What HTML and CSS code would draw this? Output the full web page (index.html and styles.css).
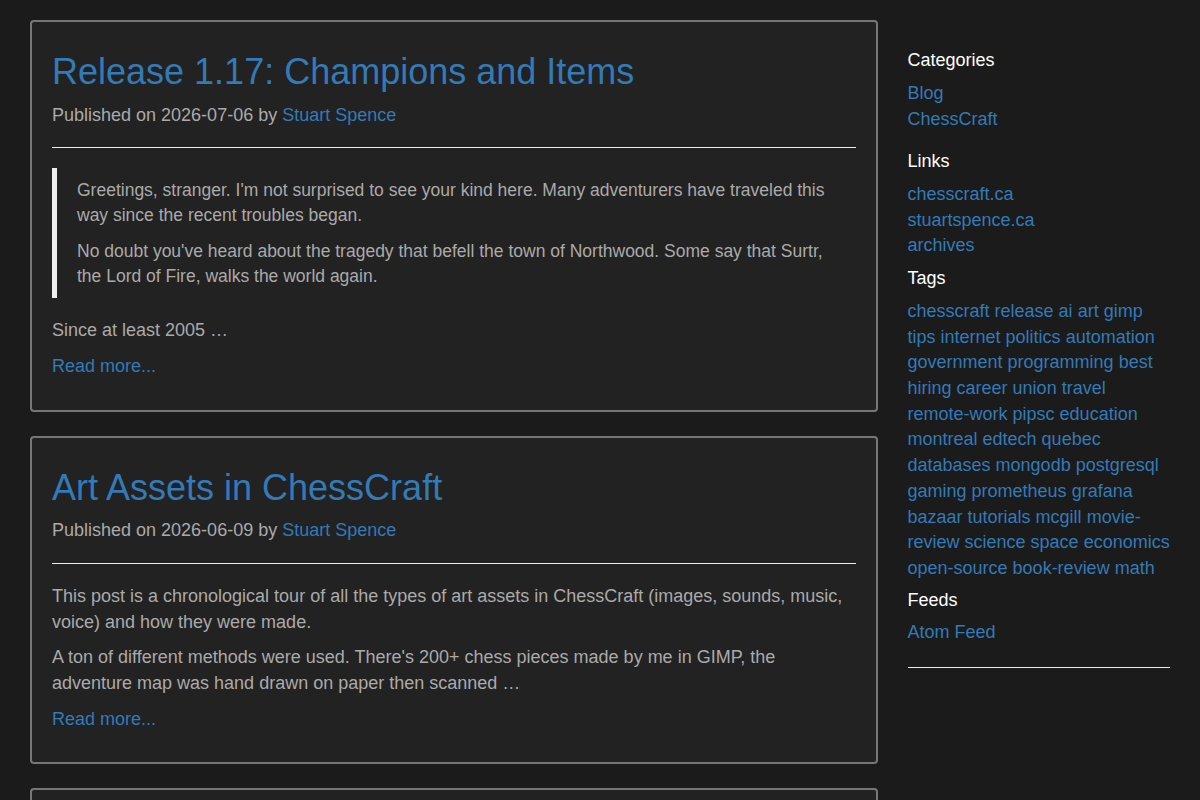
FILE: index.html
```html
<!DOCTYPE html>
<html lang="en">
<head>
    <meta charset="utf-8">
    <link rel="stylesheet" href="styles.css">
    <title>Stuart Spence - Blog</title>
</head>
<body>
    <div class="container">
        <div class="row">
            <!--POSTS-->
            <div class="main">
                <article class="post">
                    <h1 class="post-title"><a href="#">Release 1.17: Champions and Items</a></h1>
                    <p class="meta">Published on 2026-07-06 by <a href="#">Stuart Spence</a></p>
                    <hr>
                    <blockquote>
                        <p>Greetings, stranger. I'm not surprised to see your kind here. Many adventurers have traveled this way since the recent troubles began.</p>
                        <p>No doubt you've heard about the tragedy that befell the town of Northwood. Some say that Surtr, the Lord of Fire, walks the world again.</p>
                    </blockquote>
                    <p>Since at least 2005 …</p>
                    <p><a href="#">Read more...</a></p>
                </article>

                <article class="post">
                    <h1 class="post-title"><a href="#">Art Assets in ChessCraft</a></h1>
                    <p class="meta">Published on 2026-06-09 by <a href="#">Stuart Spence</a></p>
                    <hr>
                    <p>This post is a chronological tour of all the types of art assets in ChessCraft (images, sounds, music, voice) and how they were made.</p>
                    <p>A ton of different methods were used. There's 200+ chess pieces made by me in GIMP, the adventure map was hand drawn on paper then scanned …</p>
                    <p><a href="#">Read more...</a></p>
                </article>

                <article class="post">
                    <h1 class="post-title"><a href="#">Older posts</a></h1>
                </article>
            </div>

            <!--SIDEBAR-->
            <div class="sidebar">
                <h4>Categories</h4>
                <ul class="list list-spaced">
                    <li><a href="#">Blog</a></li>
                    <li><a href="#">ChessCraft</a></li>
                </ul>

                <h4>Links</h4>
                <ul class="list">
                    <li><a href="#">chesscraft.ca</a></li>
                    <li><a href="#">stuartspence.ca</a></li>
                    <li><a href="#">archives</a></li>
                </ul>

                <h4>Tags</h4>
                <p class="tags">
                    <a href="#">chesscraft</a> <a href="#">release</a> <a href="#">ai</a> <a href="#">art</a> <a href="#">gimp</a>
                    <a href="#">tips</a> <a href="#">internet</a> <a href="#">politics</a> <a href="#">automation</a>
                    <a href="#">government</a> <a href="#">programming</a> <a href="#">best</a>
                    <a href="#">hiring</a> <a href="#">career</a> <a href="#">union</a> <a href="#">travel</a>
                    <a href="#">remote-work</a> <a href="#">pipsc</a> <a href="#">education</a>
                    <a href="#">montreal</a> <a href="#">edtech</a> <a href="#">quebec</a>
                    <a href="#">databases</a> <a href="#">mongodb</a> <a href="#">postgresql</a>
                    <a href="#">gaming</a> <a href="#">prometheus</a> <a href="#">grafana</a>
                    <a href="#">bazaar</a> <a href="#">tutorials</a> <a href="#">mcgill</a> <a href="#">movie-review</a>
                    <a href="#">science</a> <a href="#">space</a> <a href="#">economics</a>
                    <a href="#">open-source</a> <a href="#">book-review</a> <a href="#">math</a>
                </p>

                <h4>Feeds</h4>
                <ul class="list">
                    <li><a href="#">Atom Feed</a></li>
                </ul>
                <hr>
            </div>
        </div>
    </div>
</body>
</html>
```

FILE: styles.css
```css
body{
    margin: 0;
    background-color: #1b1b1b;
    color: #aaaaaa;
    font-family: "Liberation Sans", Arial, sans-serif;
    font-size: 18px;
    line-height: 1.42857;
}
a{
    color: #337ab7;
    text-decoration: none;
}
p{
    margin: 0 0 10px;
}
hr{
    margin: 20px 0;
    border: 0;
    border-top: 1px solid #eeeeee;
}
.container{
    width: 1140px;
    margin: 0 auto;
    padding: 0 30px;
}
.row{
    display: flex;
    gap: 30px;
    align-items: flex-start;
}
.main{
    width: 847.5px;
    flex-shrink: 0;
    padding-top: 20px;
}
.post{
    background-color: #222222;
    border: 2px solid #777777;
    border-radius: 4px;
    padding: 30px 20px 20px;
    margin-bottom: 24px;
}
.post hr{
    margin-top: 19px;
}
.post-title{
    font-size: 36px;
    font-weight: 500;
    line-height: 1.1;
    margin: 0 0 11px;
}
.meta{
    margin: 0;
}
blockquote{
    margin: 0 0 20px;
    padding: 10px 20px 9px;
    border-left: 5px solid #eeeeee;
    font-size: 17.5px;
}
blockquote p{
    margin-bottom: 11px;
}
blockquote p:last-child{
    margin-bottom: 0;
}
.sidebar{
    width: 262.5px;
    flex-shrink: 0;
    padding-top: 51px;
}
.sidebar h4{
    color: #ffffff;
    font-size: 18px;
    font-weight: 500;
    line-height: 1.1;
    margin: 0 0 10px;
}
.list{
    list-style: none;
    padding: 0;
    margin: 0 0 10px;
}
.list-spaced{
    margin-bottom: 20px;
}
.tags{
    margin: 0 0 9px;
}
.sidebar hr{
    margin-top: 21px;
}
```
